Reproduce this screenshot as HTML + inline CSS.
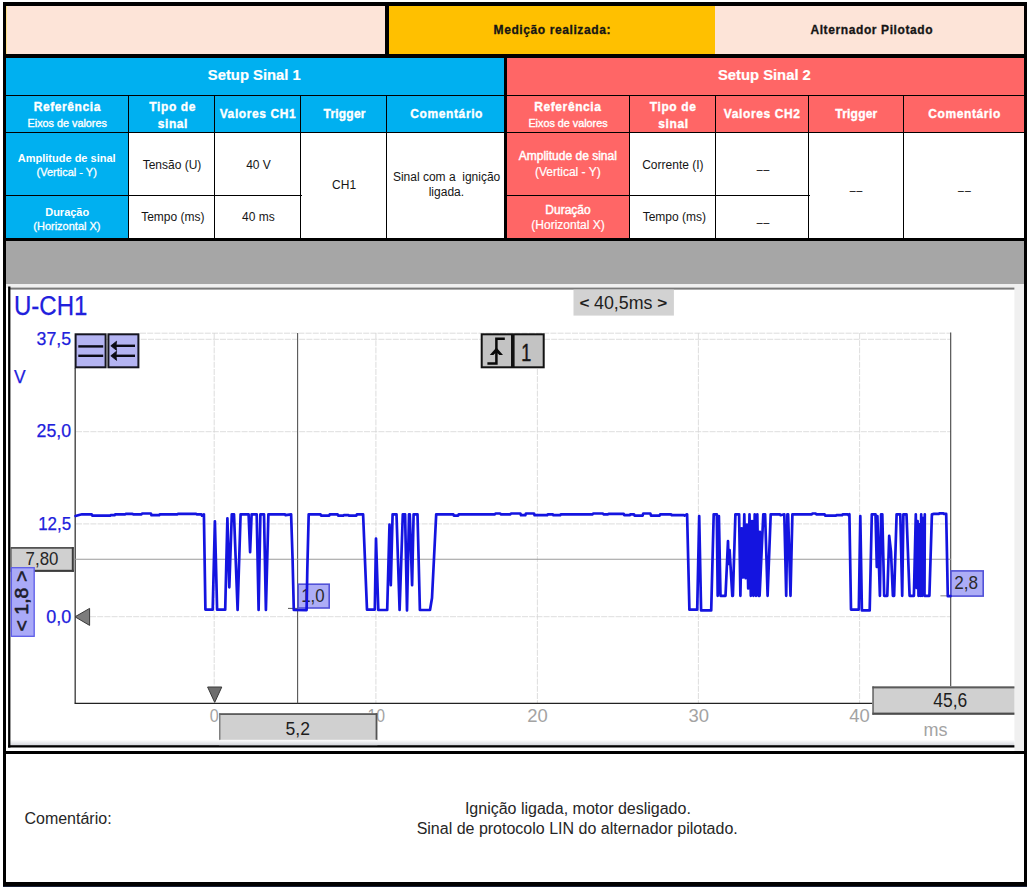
<!DOCTYPE html>
<html lang="pt">
<head>
<meta charset="utf-8">
<title>Alternador Pilotado</title>
<style>
html,body{margin:0;padding:0;background:#fff;}
body{width:1029px;height:887px;position:relative;overflow:hidden;font-family:"Liberation Sans",sans-serif;color:#111;}
.abs,.c{position:absolute;box-sizing:border-box;}
.c{display:flex;align-items:center;justify-content:center;text-align:center;}
#frame{left:3px;top:2px;width:1024px;height:885px;background:#000;}
.peach{background:#fde4d8;}
.yellow{background:#ffc000;}
.blue{background:#00b0f0;color:#fff;}
.red{background:#ff6666;color:#fff;}
.white{background:#fff;}
.hb{font-weight:bold;font-size:12px;letter-spacing:0.6px;line-height:16.6px;-webkit-text-stroke:0.35px currentColor;}
.t1{font-weight:bold;font-size:15px;-webkit-text-stroke:0.2px #fff;}
.sub{font-weight:normal;font-size:11px;letter-spacing:0;line-height:15px;-webkit-text-stroke:0.25px #fff;display:block;}
.ln{position:absolute;white-space:nowrap;text-align:center;line-height:20px;height:20px;}
.val{font-size:12px;line-height:14px;color:#111;}
.us{letter-spacing:1px;font-size:11px;}
</style>
</head>
<body>
<div id="frame" class="abs"></div>

<!-- top title row -->
<div class="abs peach" style="left:6px;top:6px;width:379px;height:48px;"></div>
<div class="abs" style="left:6px;top:6px;width:1px;height:48px;background:#ffe08a;"></div>
<div class="abs yellow" style="left:389px;top:6px;width:326px;height:48px;"></div>
<div class="abs peach" style="left:715px;top:6px;width:309px;height:48px;"></div>

<!-- Setup Sinal 1 -->
<div class="abs blue" style="left:6px;top:58px;width:498px;height:37px;"></div>
<div class="abs blue" style="left:6px;top:96px;width:122px;height:36px;"></div>
<div class="abs blue" style="left:129px;top:96px;width:85px;height:36px;"></div>
<div class="abs blue" style="left:215px;top:96px;width:85px;height:36px;"></div>
<div class="abs blue" style="left:301px;top:96px;width:85px;height:36px;"></div>
<div class="abs blue" style="left:387px;top:96px;width:117px;height:36px;"></div>

<div class="abs blue" style="left:6px;top:133px;width:122px;height:62px;"></div>
<div class="abs blue" style="left:6px;top:196px;width:122px;height:42px;"></div>
<div class="abs white" style="left:129px;top:133px;width:85px;height:62px;"></div>
<div class="abs white" style="left:129px;top:196px;width:85px;height:42px;"></div>
<div class="abs white" style="left:215px;top:133px;width:85px;height:62px;"></div>
<div class="abs white" style="left:215px;top:196px;width:85px;height:42px;"></div>
<div class="abs white" style="left:301px;top:133px;width:85px;height:105px;"></div>
<div class="abs" style="left:300px;top:195px;width:2px;height:1px;background:#000;"></div>
<div class="abs white" style="left:387px;top:133px;width:117px;height:105px;"></div>

<!-- Setup Sinal 2 -->
<div class="abs red" style="left:507px;top:58px;width:517px;height:37px;"></div>
<div class="abs red" style="left:507px;top:96px;width:122px;height:36px;"></div>
<div class="abs red" style="left:630px;top:96px;width:85px;height:36px;"></div>
<div class="abs red" style="left:716px;top:96px;width:92px;height:36px;"></div>
<div class="abs red" style="left:809px;top:96px;width:94px;height:36px;"></div>
<div class="abs red" style="left:904px;top:96px;width:120px;height:36px;"></div>

<div class="abs red" style="left:507px;top:133px;width:122px;height:62px;"></div>
<div class="abs red" style="left:507px;top:196px;width:122px;height:42px;"></div>
<div class="abs white" style="left:630px;top:133px;width:85px;height:62px;"></div>
<div class="abs white" style="left:630px;top:196px;width:85px;height:42px;"></div>
<div class="abs white" style="left:716px;top:133px;width:92px;height:62px;"></div>
<div class="abs white" style="left:716px;top:196px;width:92px;height:42px;"></div>
<div class="abs white" style="left:809px;top:133px;width:94px;height:105px;"></div>
<div class="abs" style="left:808px;top:195px;width:2px;height:1px;background:#000;"></div>
<div class="abs white" style="left:904px;top:133px;width:120px;height:105px;"></div>

<div class="ln" style="left:402.3px;top:20.14px;width:300px;font-size:12px;font-weight:bold;color:#151515;letter-spacing:0.6px;-webkit-text-stroke:0.3px #151515;">Medição realizada:</div>
<div class="ln" style="left:721.8px;top:20.14px;width:300px;font-size:12px;font-weight:bold;color:#151515;letter-spacing:0.6px;-webkit-text-stroke:0.3px #151515;">Alternador Pilotado</div>
<div class="ln" style="left:104.3px;top:64.57px;width:300px;font-size:14.8px;font-weight:bold;color:#fff;-webkit-text-stroke:0.2px #fff;">Setup Sinal 1</div>
<div class="ln" style="left:614.4px;top:64.57px;width:300px;font-size:14.8px;font-weight:bold;color:#fff;-webkit-text-stroke:0.2px #fff;">Setup Sinal 2</div>
<div class="ln" style="left:-82.7px;top:97.34px;width:300px;font-size:12px;font-weight:bold;color:#fff;letter-spacing:0.6px;-webkit-text-stroke:0.35px #fff;">Referência</div>
<div class="ln" style="left:-82.8px;top:112.86px;width:300px;font-size:10.8px;font-weight:normal;color:#fff;-webkit-text-stroke:0.35px #fff;">Eixos de valores</div>
<div class="ln" style="left:22.7px;top:96.54px;width:300px;font-size:12px;font-weight:bold;color:#fff;letter-spacing:0.6px;-webkit-text-stroke:0.35px #fff;">Tipo de</div>
<div class="ln" style="left:22.9px;top:113.74px;width:300px;font-size:12px;font-weight:bold;color:#fff;letter-spacing:0.6px;-webkit-text-stroke:0.35px #fff;">sinal</div>
<div class="ln" style="left:108.0px;top:104.44px;width:300px;font-size:12px;font-weight:bold;color:#fff;letter-spacing:0.6px;-webkit-text-stroke:0.35px #fff;">Valores CH1</div>
<div class="ln" style="left:194.6px;top:104.44px;width:300px;font-size:12px;font-weight:bold;color:#fff;letter-spacing:0.2px;-webkit-text-stroke:0.35px #fff;">Trigger</div>
<div class="ln" style="left:296.7px;top:104.44px;width:300px;font-size:12px;font-weight:bold;color:#fff;letter-spacing:0.6px;-webkit-text-stroke:0.35px #fff;">Comentário</div>
<div class="ln" style="left:417.9px;top:97.34px;width:300px;font-size:12px;font-weight:bold;color:#fff;letter-spacing:0.6px;-webkit-text-stroke:0.35px #fff;">Referência</div>
<div class="ln" style="left:418.0px;top:112.86px;width:300px;font-size:10.8px;font-weight:normal;color:#fff;-webkit-text-stroke:0.35px #fff;">Eixos de valores</div>
<div class="ln" style="left:523.1px;top:96.54px;width:300px;font-size:12px;font-weight:bold;color:#fff;letter-spacing:0.6px;-webkit-text-stroke:0.35px #fff;">Tipo de</div>
<div class="ln" style="left:523.5px;top:113.74px;width:300px;font-size:12px;font-weight:bold;color:#fff;letter-spacing:0.6px;-webkit-text-stroke:0.35px #fff;">sinal</div>
<div class="ln" style="left:612.2px;top:104.44px;width:300px;font-size:12px;font-weight:bold;color:#fff;letter-spacing:0.6px;-webkit-text-stroke:0.35px #fff;">Valores CH2</div>
<div class="ln" style="left:706.4px;top:104.44px;width:300px;font-size:12px;font-weight:bold;color:#fff;letter-spacing:0.2px;-webkit-text-stroke:0.35px #fff;">Trigger</div>
<div class="ln" style="left:814.6px;top:104.44px;width:300px;font-size:12px;font-weight:bold;color:#fff;letter-spacing:0.6px;-webkit-text-stroke:0.35px #fff;">Comentário</div>
<div class="ln" style="left:-83.3px;top:147.69px;width:300px;font-size:11px;font-weight:bold;color:#fff;">Amplitude de sinal</div>
<div class="ln" style="left:-83.3px;top:161.59px;width:300px;font-size:11px;font-weight:normal;color:#fff;-webkit-text-stroke:0.3px #fff;">(Vertical - Y)</div>
<div class="ln" style="left:-82.8px;top:201.79px;width:300px;font-size:11px;font-weight:bold;color:#fff;">Duração</div>
<div class="ln" style="left:-83.1px;top:215.69px;width:300px;font-size:11px;font-weight:normal;color:#fff;-webkit-text-stroke:0.3px #fff;">(Horizontal X)</div>
<div class="ln" style="left:417.8px;top:146.04px;width:300px;font-size:12px;font-weight:normal;color:#fff;-webkit-text-stroke:0.45px #fff;">Amplitude de sinal</div>
<div class="ln" style="left:417.8px;top:161.84px;width:300px;font-size:12px;font-weight:normal;color:#fff;-webkit-text-stroke:0.2px #fff;">(Vertical - Y)</div>
<div class="ln" style="left:418.0px;top:200.34px;width:300px;font-size:12px;font-weight:normal;color:#fff;-webkit-text-stroke:0.45px #fff;">Duração</div>
<div class="ln" style="left:418.0px;top:214.84px;width:300px;font-size:12px;font-weight:normal;color:#fff;-webkit-text-stroke:0.2px #fff;">(Horizontal X)</div>
<div class="ln" style="left:22.0px;top:154.74px;width:300px;font-size:12px;font-weight:normal;color:#151515;">Tensão (U)</div>
<div class="ln" style="left:22.8px;top:207.24px;width:300px;font-size:12px;font-weight:normal;color:#151515;">Tempo (ms)</div>
<div class="ln" style="left:108.5px;top:154.74px;width:300px;font-size:12px;font-weight:normal;color:#151515;">40 V</div>
<div class="ln" style="left:108.3px;top:207.24px;width:300px;font-size:12px;font-weight:normal;color:#151515;">40 ms</div>
<div class="ln" style="left:194.1px;top:175.24px;width:300px;font-size:12px;font-weight:normal;color:#151515;">CH1</div>
<div class="ln" style="left:296.6px;top:167.44px;width:300px;font-size:12px;font-weight:normal;color:#151515;"><span style="white-space:pre">Sinal com a  ignição</span></div>
<div class="ln" style="left:296.4px;top:182.34px;width:300px;font-size:12px;font-weight:normal;color:#151515;">ligada.</div>
<div class="ln" style="left:522.9px;top:154.74px;width:300px;font-size:12px;font-weight:normal;color:#151515;">Corrente (I)</div>
<div class="ln" style="left:524.3px;top:207.24px;width:300px;font-size:12px;font-weight:normal;color:#151515;">Tempo (ms)</div>
<div class="ln" style="left:613.8px;top:156.31px;width:300px;font-size:9.5px;font-weight:normal;color:#000;letter-spacing:1.6px;-webkit-text-stroke:0.2px #000;">__</div>
<div class="ln" style="left:613.8px;top:209.31px;width:300px;font-size:9.5px;font-weight:normal;color:#000;letter-spacing:1.6px;-webkit-text-stroke:0.2px #000;">__</div>
<div class="ln" style="left:706.8px;top:177.41px;width:300px;font-size:9.5px;font-weight:normal;color:#000;letter-spacing:1.6px;-webkit-text-stroke:0.2px #000;">__</div>
<div class="ln" style="left:815.2px;top:177.41px;width:300px;font-size:9.5px;font-weight:normal;color:#000;letter-spacing:1.6px;-webkit-text-stroke:0.2px #000;">__</div>

<!-- gray band -->
<div class="abs" style="left:6px;top:241px;width:1018px;height:43px;background:#a6a6a6;"></div>

<!-- chart -->
<svg class="abs" style="left:6px;top:284px;" width="1018" height="467" viewBox="6 284 1018 467" font-family="Liberation Sans, sans-serif">
  <defs>
    <linearGradient id="gb" x1="0" y1="0" x2="0" y2="1"><stop offset="0" stop-color="#fff"/><stop offset="1" stop-color="#d4d6dc"/></linearGradient>
  </defs>
  <rect x="6" y="284" width="1018" height="467" fill="#fff"/>
  <rect x="6" y="284" width="1018" height="4" fill="#f0f0f0"/>
  <rect x="1014.4" y="284" width="9.6" height="467" fill="#f0f0f0"/>
  <rect x="10" y="287.6" width="1004.4" height="2" fill="#7a7a7a"/>
  <rect x="10" y="739.8" width="1004.4" height="5.6" fill="url(#gb)"/>
  <rect x="8" y="745.2" width="1006.4" height="2.3" fill="#000"/>
  <rect x="8.1" y="286.5" width="2.3" height="461" fill="#000"/>

  <!-- grid -->
  <g stroke="#d4d4d4" stroke-width="0.8" stroke-dasharray="6 1.2" fill="none">
    <line x1="140" y1="333.2" x2="951" y2="333.2"/>
    <line x1="76" y1="339.3" x2="951" y2="339.3"/>
    <line x1="76" y1="431.7" x2="951" y2="431.7"/>
    <line x1="76" y1="523.9" x2="951" y2="523.9"/>
    <line x1="90" y1="616.7" x2="951" y2="616.7"/>
    <line x1="214.2" y1="333" x2="214.2" y2="686"/>
    <line x1="375.9" y1="333" x2="375.9" y2="703"/>
    <line x1="537.4" y1="333" x2="537.4" y2="703"/>
    <line x1="698.4" y1="333" x2="698.4" y2="703"/>
    <line x1="859.6" y1="333" x2="859.6" y2="703"/>
  </g>
  <!-- axes & cursors -->
  <line x1="75.2" y1="368" x2="75.2" y2="703.8" stroke="#444" stroke-width="1.4"/>
  <line x1="74.7" y1="703.3" x2="872.4" y2="703.3" stroke="#222" stroke-width="1.2"/>
  <line x1="950.7" y1="332.6" x2="950.7" y2="686.5" stroke="#444" stroke-width="1.1"/>
  <line x1="297.6" y1="333" x2="297.6" y2="703.3" stroke="#555" stroke-width="1.1"/>
  <line x1="73" y1="559.2" x2="951" y2="559.2" stroke="#9a9a9a" stroke-width="1.1"/>
  <line x1="288" y1="608.4" x2="297.6" y2="608.4" stroke="#555" stroke-width="1"/>
  <line x1="940.4" y1="595.8" x2="950.5" y2="595.8" stroke="#999" stroke-width="1.2"/>

  <!-- value label boxes -->
  <rect x="298.2" y="584.2" width="31" height="23.8" fill="#adadf6" stroke="#5252d8" stroke-width="1.6"/>
  <text x="301.2" y="602.3" font-size="18.5" fill="#2a2a2a" textLength="23.4" lengthAdjust="spacingAndGlyphs">1,0</text>
  <rect x="951" y="570.9" width="32.2" height="25.2" fill="#adadf6" stroke="#5252d8" stroke-width="1.6"/>
  <text x="954.2" y="589.1" font-size="18.5" fill="#2a2a2a" textLength="23.8" lengthAdjust="spacingAndGlyphs">2,8</text>

  <!-- waveform -->
  <polyline fill="none" stroke="#1414e0" stroke-width="2.7" stroke-linejoin="round" stroke-linecap="round" points="75.5,516.0 79.0,515.0 82.0,514.3 86.1,514.3 86.7,514.3 91.7,514.3 92.3,515.6 101.4,515.6 102.0,515.6 110.2,515.6 110.8,515.2 114.6,515.2 115.2,514.3 125.3,514.3 125.9,513.8 132.4,513.8 133.0,514.3 141.5,514.3 142.1,513.5 150.9,513.5 151.5,515.2 159.2,515.2 159.8,514.3 170.1,514.3 170.7,514.3 173.8,514.3 174.4,514.3 177.5,514.3 178.1,513.8 186.6,513.8 187.2,513.8 196.0,513.8 196.6,514.3 201.4,514.3 202.0,515.6 203.9,514.3 203.9,514.3 205.4,609.6 212.7,609.6 214.9,521.4 217.1,609.6 225.2,609.6 227.4,518.4 229.3,587.3 231.8,514.3 234.0,514.3 237.6,610.0 240.6,514.3 248.6,514.3 250.1,552.2 251.6,514.3 256.7,514.3 258.6,610.0 260.4,514.3 264.0,514.3 265.9,610.0 268.4,514.3 270.0,514.3 280.6,514.3 281.2,514.3 285.0,514.3 285.6,515.2 291.1,514.3 291.1,514.3 292.6,560.0 293.8,609.9 306.6,610.1 307.3,570.0 308.7,514.3 311.0,514.3 315.9,514.3 316.5,514.3 320.5,514.3 321.1,515.6 329.2,515.6 329.8,514.3 337.6,514.3 338.2,515.6 343.3,515.6 343.9,515.2 348.4,515.2 349.0,515.6 356.3,515.6 356.9,514.3 363.1,514.3 363.1,514.3 367.0,609.6 374.8,609.6 376.0,538.5 378.3,610.0 387.2,610.0 389.5,524.5 390.8,585.2 392.6,514.3 396.5,514.3 399.6,610.0 402.8,514.3 405.1,514.3 407.0,610.5 409.0,514.3 409.8,514.3 412.1,585.2 413.6,514.3 417.5,514.3 419.9,610.0 430.0,610.0 432.0,598.0 436.2,514.3 439.0,514.3 443.9,514.3 444.5,514.3 453.3,514.3 453.9,515.6 458.1,515.6 458.7,514.3 461.9,514.3 462.5,514.3 472.8,514.3 473.4,514.3 478.2,514.3 478.8,514.3 484.7,514.3 485.3,514.3 494.9,514.3 495.5,513.5 500.2,513.5 500.8,514.3 510.4,514.3 511.0,513.5 520.4,513.5 521.0,515.2 525.3,515.2 525.9,513.5 534.0,513.5 534.6,515.2 538.3,515.2 538.9,515.2 547.2,515.2 547.8,514.3 552.8,514.3 553.4,515.2 560.2,515.2 560.8,514.3 571.4,514.3 572.0,514.3 581.7,514.3 582.3,514.3 592.6,514.3 593.2,513.5 602.9,513.5 603.5,514.3 608.1,514.3 608.7,513.8 616.5,513.8 617.1,513.8 623.7,513.8 624.3,515.2 629.7,515.2 630.3,514.3 634.0,514.3 634.6,515.6 642.6,515.6 643.2,513.5 650.4,513.5 651.0,515.6 659.6,515.6 660.2,514.3 671.1,514.3 671.7,515.2 675.3,515.2 675.9,515.2 684.0,515.2 684.6,515.6 687.1,514.3 687.1,514.3 689.4,609.6 697.2,609.6 699.2,516.0 701.1,610.4 711.2,610.4 713.7,514.3 716.8,514.3 717.7,595.8 718.9,516.0 720.5,595.8 725.5,595.8 728.0,541.0 728.6,564.0 729.6,550.0 732.3,595.8 732.9,595.8 735.4,514.3 739.1,514.3 740.4,595.8 741.7,528.4 743.0,577.4 744.3,514.3 745.6,578.1 746.9,524.7 748.2,588.5 749.5,514.3 750.8,595.8 752.1,521.1 753.4,595.8 754.7,514.3 756.0,595.8 757.3,514.3 758.6,595.8 759.9,531.9 759.6,595.8 763.3,514.3 765.1,514.3 767.6,595.8 770.7,514.3 772.0,514.3 780.0,514.3 780.6,515.2 784.3,514.3 784.3,514.3 786.2,595.8 787.4,514.3 788.1,514.3 790.5,595.8 792.4,514.3 795.0,514.3 804.3,514.3 804.9,514.3 811.8,514.3 812.4,513.5 815.7,513.5 816.3,514.3 824.6,514.3 825.2,515.6 835.9,515.6 836.5,515.2 842.1,515.2 842.7,514.3 847.9,514.3 848.5,515.2 849.4,514.3 849.4,514.3 851.0,609.6 858.8,609.6 860.3,516.0 861.9,610.4 869.7,610.4 871.8,514.3 875.5,514.3 876.8,566.9 877.4,516.0 879.9,595.8 881.1,514.3 882.3,514.3 884.2,595.8 887.3,595.8 889.2,535.9 891.0,552.0 892.9,595.8 894.1,595.8 896.6,514.3 900.3,514.3 902.2,595.8 903.4,514.3 906.5,514.3 909.6,595.8 913.9,595.8 915.8,514.3 916.7,587.9 917.6,521.0 918.5,595.8 919.4,524.3 920.3,595.8 921.2,514.3 922.1,595.8 923.0,518.0 923.9,577.2 924.8,514.3 924.5,595.8 929.4,595.8 931.9,514.3 934.0,513.9 938.8,513.9 939.4,513.4 943.4,513.4 944.0,513.9 946.2,513.9 946.2,514.3 947.8,596.2 950.5,596.2"/>

  <!-- labels -->
  <g fill="#2020dc" stroke="#2020dc" stroke-width="0.25">
    <text x="14" y="315.2" font-size="27" textLength="73.4" lengthAdjust="spacingAndGlyphs">U-CH1</text>
    <text x="36.6" y="345" font-size="18.5" textLength="34.5" lengthAdjust="spacingAndGlyphs">37,5</text>
    <text x="14" y="382.6" font-size="18.5" textLength="11.6" lengthAdjust="spacingAndGlyphs">V</text>
    <text x="36.6" y="437.4" font-size="18.5" textLength="34.5" lengthAdjust="spacingAndGlyphs">25,0</text>
    <text x="38.2" y="530.2" font-size="18.5" textLength="33" lengthAdjust="spacingAndGlyphs">12,5</text>
    <text x="46.2" y="623" font-size="18.5" textLength="25" lengthAdjust="spacingAndGlyphs">0,0</text>
  </g>
  <g fill="#a3a3a3">
    <text x="209.8" y="722" font-size="19" textLength="9" lengthAdjust="spacingAndGlyphs">0</text>
    <text x="367.6" y="722" font-size="19" textLength="17.5" lengthAdjust="spacingAndGlyphs">10</text>
    <text x="527.3" y="722" font-size="19" textLength="20.5" lengthAdjust="spacingAndGlyphs">20</text>
    <text x="688.6" y="722" font-size="19" textLength="20.5" lengthAdjust="spacingAndGlyphs">30</text>
    <text x="849.2" y="722" font-size="19" textLength="20.5" lengthAdjust="spacingAndGlyphs">40</text>
    <text x="923.6" y="735.7" font-size="19" textLength="24" lengthAdjust="spacingAndGlyphs">ms</text>
  </g>

  <!-- lilac buttons -->
  <rect x="75.6" y="334.3" width="30" height="33" fill="#b4b4f2" stroke="#15151f" stroke-width="2"/>
  <rect x="108.4" y="334.3" width="30" height="33" fill="#b4b4f2" stroke="#15151f" stroke-width="2"/>
  <g stroke="#0b0b14" stroke-width="2.4" fill="none">
    <line x1="78.3" y1="346.4" x2="103.2" y2="346.4"/>
    <line x1="78.3" y1="355.8" x2="103.2" y2="355.8"/>
    <line x1="113" y1="345.8" x2="135" y2="345.8"/>
    <line x1="113" y1="355.8" x2="135" y2="355.8"/>
  </g>
  <path d="M110.8 345.8 L116.6 341.2 L116 345.8 L116.6 350.4 Z M110.8 355.8 L116.6 351.2 L116 355.8 L116.6 360.4 Z" fill="#0b0b14" stroke="#0b0b14" stroke-width="0.8" stroke-linejoin="round"/>

  <!-- trigger buttons -->
  <rect x="481.7" y="334.3" width="62" height="33" fill="#c3c3c3" stroke="#121212" stroke-width="2"/>
  <rect x="511" y="334" width="3.6" height="34" fill="#121212"/>
  <path d="M487.4 363.4 H496.4 V338.8 H504.8" fill="none" stroke="#0a0a0a" stroke-width="2.5"/>
  <path d="M496.4 347.6 L503 355 L499.4 355 L496.4 352.2 L493.4 355 L489.8 355 Z" fill="#0a0a0a"/>
  <text x="521.3" y="360.8" font-size="23.6" fill="#161616" stroke="#161616" stroke-width="0.5" textLength="10" lengthAdjust="spacingAndGlyphs">1</text>

  <!-- time span label -->
  <rect x="573.5" y="289.6" width="100.4" height="26" fill="#d2d2d2"/>
  <text x="579.4" y="307.8" font-size="14" font-weight="bold" fill="#1d1d1d" textLength="10" lengthAdjust="spacingAndGlyphs">&lt;</text>
  <text x="594" y="309.2" font-size="18.5" fill="#1d1d1d" textLength="58.4" lengthAdjust="spacingAndGlyphs">40,5ms</text>
  <text x="657.2" y="307.8" font-size="14" font-weight="bold" fill="#1d1d1d" textLength="10" lengthAdjust="spacingAndGlyphs">&gt;</text>

  <!-- 7,80 box -->
  <rect x="11" y="547.4" width="62.6" height="24.2" fill="#d0d0d0"/>
  <rect x="11" y="547.1" width="62.8" height="1.6" fill="#454545"/>
  <rect x="11" y="569.8" width="62.8" height="2.1" fill="#3c3c3c"/>
  <rect x="71.8" y="547.1" width="2" height="24.8" fill="#3c3c3c"/>
  <rect x="10.4" y="547.1" width="1.2" height="24.8" fill="#555"/>
  <text x="25.6" y="565.4" font-size="18.5" fill="#262626" textLength="32.8" lengthAdjust="spacingAndGlyphs">7,80</text>
  <!-- rotated 1,8 -->
  <rect x="11.3" y="567.7" width="22.9" height="68.6" fill="#aaaaf8" stroke="#5c5ce8" stroke-width="1.3"/>
  <text transform="translate(27.7 631.6) rotate(-90)" font-size="18" fill="#1c1c2a" stroke="#1c1c2a" stroke-width="0.6" textLength="61" lengthAdjust="spacingAndGlyphs">&lt; 1,8 &gt;</text>
  <!-- zero marker -->
  <path d="M75 616.8 L89.6 608.4 L89.6 625.4 Z" fill="#7c7c7c" stroke="#3a3a3a" stroke-width="1"/>
  <!-- trigger time marker -->
  <path d="M207.6 687 L221.8 687 L214.7 702.4 Z" fill="#6e6e6e" stroke="#3a3a3a" stroke-width="1"/>

  <!-- 5,2 box -->
  <rect x="219.2" y="713.4" width="158" height="27" fill="#d0d0d0"/>
  <rect x="219.2" y="713.2" width="158" height="1.8" fill="#5c5c5c"/>
  <rect x="219.2" y="713.2" width="1.2" height="27" fill="#6a6a6a"/>
  <rect x="375.6" y="713.2" width="1.8" height="27" fill="#555"/>
  <text x="285.6" y="734.9" font-size="19" fill="#1d1d1d" textLength="24.4" lengthAdjust="spacingAndGlyphs">5,2</text>
  <rect x="219.2" y="739.8" width="158.2" height="5.4" fill="url(#gb)"/>

  <!-- 45,6 box -->
  <rect x="872.4" y="686.4" width="142" height="28.3" fill="#d0d0d0"/>
  <rect x="872.4" y="686.4" width="142" height="2" fill="#5a5a5a"/>
  <rect x="872.4" y="712.6" width="142" height="2.2" fill="#4c4c4c"/>
  <rect x="872.4" y="686.4" width="1.3" height="28.3" fill="#555"/>
  <text x="933.3" y="707.4" font-size="19.4" fill="#1d1d1d" textLength="34" lengthAdjust="spacingAndGlyphs">45,6</text>
</svg>

<div class="abs" style="left:3px;top:886px;width:1024px;height:1px;background:#1a2238;"></div>
<!-- comment area -->
<div class="abs white" style="left:6px;top:754px;width:1018px;height:128px;"></div>
<div class="ln" style="left:-82.0px;top:809.16px;width:300px;font-size:16px;font-weight:normal;color:#262626;">Comentário:</div>
<div class="ln" style="left:277.9px;top:799.06px;width:600px;font-size:16px;font-weight:normal;color:#262626;">Ignição ligada, motor desligado.</div>
<div class="ln" style="left:277.2px;top:818.66px;width:600px;font-size:16px;font-weight:normal;color:#262626;">Sinal de protocolo LIN do alternador pilotado.</div>
</body>
</html>
